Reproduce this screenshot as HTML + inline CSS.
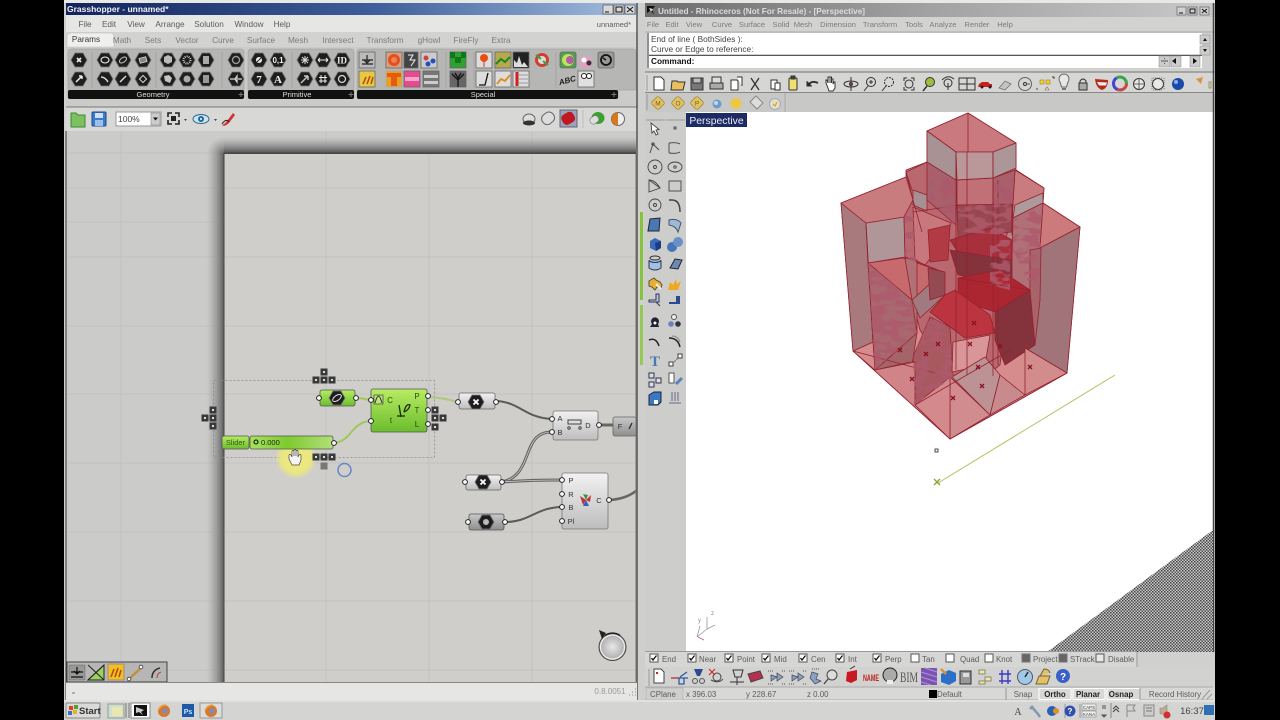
<!DOCTYPE html>
<html><head><meta charset="utf-8"><title>Grasshopper and Rhinoceros</title>
<style>html,body{margin:0;padding:0;background:#000;overflow:hidden}svg{display:block;filter:blur(.35px);font-size:8.5px}text{font-family:"Liberation Sans",sans-serif;fill:#5c5c5c}.b{font-weight:bold;fill:#222}.w{fill:#ddd;font-size:7.5px}.s{fill:#7c7c7c}</style></head><body>
<svg xmlns="http://www.w3.org/2000/svg" width="1280" height="720" viewBox="0 0 1280 720">
<defs>
<linearGradient id="gt" x1="0" x2="1"><stop offset="0" stop-color="#12235c"/><stop offset=".55" stop-color="#3f609c"/><stop offset="1" stop-color="#a6c0e0"/></linearGradient>
<linearGradient id="rt" x1="0" x2="1"><stop offset="0" stop-color="#6c6c6c"/><stop offset=".5" stop-color="#a2a2a2"/><stop offset="1" stop-color="#c8c8c8"/></linearGradient>
<linearGradient id="sh" x1="0" x2="1"><stop offset="0" stop-color="#999" stop-opacity="0"/><stop offset=".6" stop-color="#8c8c8c" stop-opacity=".8"/><stop offset="1" stop-color="#5c5c5c"/></linearGradient>
<linearGradient id="sv" x1="0" x2="0" y1="0" y2="1"><stop offset="0" stop-color="#999" stop-opacity="0"/><stop offset=".6" stop-color="#808080" stop-opacity=".85"/><stop offset="1" stop-color="#484848"/></linearGradient>
<radialGradient id="co" gradientUnits="userSpaceOnUse" cx="224" cy="154" r="17"><stop offset="0" stop-color="#5c5c5c"/><stop offset=".4" stop-color="#8c8c8c" stop-opacity=".8"/><stop offset="1" stop-color="#999" stop-opacity="0"/></radialGradient>
<linearGradient id="g1" x1="0" x2="0" y1="0" y2="1"><stop offset="0" stop-color="#b7ec62"/><stop offset="1" stop-color="#6cbc2e"/></linearGradient>
<linearGradient id="w1" x1="0" x2="0" y1="0" y2="1"><stop offset="0" stop-color="#f2f2f2"/><stop offset="1" stop-color="#bdbdbd"/></linearGradient>
<linearGradient id="w2" x1="0" x2="0" y1="0" y2="1"><stop offset="0" stop-color="#c9c9c9"/><stop offset="1" stop-color="#8e8e8e"/></linearGradient>
<linearGradient id="sl" x1="0" x2="1"><stop offset="0" stop-color="#a6e25c"/><stop offset=".45" stop-color="#7ecb30"/><stop offset="1" stop-color="#b2de7a"/></linearGradient>
<radialGradient id="yl"><stop offset="0" stop-color="#f2ec78"/><stop offset=".72" stop-color="#ece87c" stop-opacity=".9"/><stop offset="1" stop-color="#ece87c" stop-opacity="0"/></radialGradient>
<radialGradient id="cl"><stop offset="0" stop-color="#e8e8e8"/><stop offset="1" stop-color="#a8a8a8"/></radialGradient>
<pattern id="ck" width="3" height="3" patternUnits="userSpaceOnUse"><rect width="3" height="3" fill="#c8c8c8"/><rect width="1.5" height="1.5" fill="#444"/><rect x="1.5" y="1.5" width="1.5" height="1.5" fill="#555"/></pattern>
<filter id="mot" x="0" y="0" width="1" height="1"><feTurbulence type="fractalNoise" baseFrequency=".07 .14" numOctaves="2" seed="4"/><feColorMatrix values="0 0 0 0 .42 0 0 0 0 .1 0 0 0 0 .15 0 0 0 10 -4.6"/><feComposite in2="SourceAlpha" operator="in"/></filter>
<g id="h"><polygon points="-8,0 -4,-7 4,-7 8,0 4,7 -4,7" fill="#1e1e1e" stroke="#777" stroke-width=".8"/></g>
<g id="n"><rect x="-3.5" y="-3.5" width="7" height="7" fill="#3a3a3a"/><rect x="-1" y="-1" width="2" height="2" fill="#ddd"/></g>
<g id="p"><circle r="2.4" fill="#fff" stroke="#222" stroke-width="1"/></g>
<g id="x"><path d="M-2-2L2 2M-2 2L2-2" stroke="#8b1220" stroke-width="1.3"/></g>
<g id="ck0"><rect x="-4" y="-4" width="8" height="8" fill="#fff" stroke="#555"/><path d="M-2.5 0L-1 2L2.5-2.5" fill="none" stroke="#111" stroke-width="1.3"/></g>
<g id="tag"><rect x="-5" y="-5" width="10" height="10" rx="2" fill="#e2c268" stroke="#a88c30" stroke-width=".8" transform="rotate(45)"/></g>
</defs>

<rect width="1280" height="720" fill="#000"/>
<rect x="64" y="0" width="1151" height="720" fill="#d0d0ce"/>
<rect x="64" y="0" width="1151" height="3" fill="#e8e8e4"/>

<!-- GRASSHOPPER WINDOW -->
<rect x="66" y="3" width="572" height="12" fill="url(#gt)"/>
<text x="67" y="12" style="font-weight:bold;fill:#f2f2f2;font-size:8.5px">Grasshopper - unnamed*</text>
<g fill="#d8d8d8" stroke="#444" stroke-width=".6"><rect x="603" y="5" width="10" height="9"/><rect x="614" y="5" width="10" height="9"/><rect x="625" y="5" width="10" height="9"/></g>
<path d="M605 12h4" stroke="#111"/><rect x="616" y="7" width="6" height="5" fill="none" stroke="#111"/><path d="M627 7l6 5M633 7l-6 5" stroke="#111"/>
<rect x="66" y="15" width="572" height="17" fill="#e6e6e4"/>
<g style="font-size:8.2px">
<text x="85" y="27" text-anchor="middle">File</text><text x="109" y="27" text-anchor="middle">Edit</text><text x="136" y="27" text-anchor="middle">View</text><text x="170" y="27" text-anchor="middle">Arrange</text><text x="209" y="27" text-anchor="middle">Solution</text><text x="249" y="27" text-anchor="middle">Window</text><text x="282" y="27" text-anchor="middle">Help</text>
<text x="631" y="27" text-anchor="end" style="font-size:7.5px">unnamed*</text>
</g>
<rect x="66" y="32" width="572" height="16" fill="#d2d2d0"/>
<path d="M67 47v-10q0-4 4-4h39q4 0 4 4v10z" fill="#efefed" stroke="#bbb" stroke-width=".6"/>
<g style="font-size:8.2px">
<text x="86" y="42" text-anchor="middle" style="fill:#333">Params</text><text x="122" y="43" text-anchor="middle" class="s">Math</text><text x="153" y="43" text-anchor="middle" class="s">Sets</text><text x="187" y="43" text-anchor="middle" class="s">Vector</text><text x="223" y="43" text-anchor="middle" class="s">Curve</text><text x="261" y="43" text-anchor="middle" class="s">Surface</text><text x="298" y="43" text-anchor="middle" class="s">Mesh</text><text x="338" y="43" text-anchor="middle" class="s">Intersect</text><text x="385" y="43" text-anchor="middle" class="s">Transform</text><text x="429" y="43" text-anchor="middle" class="s">gHowl</text><text x="466" y="43" text-anchor="middle" class="s">FireFly</text><text x="501" y="43" text-anchor="middle" class="s">Extra</text>
</g>
<rect x="66" y="47" width="572" height="60" fill="#cbcbc9"/>
<path d="M68 52q0-3 3-3h169q4 0 4 3v46H68z" fill="#b6b6b4" stroke="#999" stroke-width=".5"/>
<path d="M248 52q0-3 3-3h100q3 0 3 3v46H248z" fill="#b6b6b4" stroke="#999" stroke-width=".5"/>
<path d="M357 52q0-3 3-3h273q3 0 3 3v38H618v8H357z" fill="#b6b6b4" stroke="#999" stroke-width=".5"/>
<g fill="#111"><rect x="68" y="90" width="176" height="9" rx="2"/><rect x="248" y="90" width="106" height="9" rx="2"/><rect x="357" y="90" width="261" height="9" rx="2"/></g>
<text x="153" y="97" text-anchor="middle" class="w">Geometry</text><text x="297" y="97" text-anchor="middle" class="w">Primitive</text><text x="483" y="97" text-anchor="middle" class="w">Special</text>
<path d="M241 92v5M238.500 94.500h5M351 92v5M348.500 94.500h5M614 92v5M611.500 94.500h5" stroke="#777"/>
<path d="M92 52v36M156 52v36M222 52v36M292 52v36M474 52v36M556 52v36M446 52v36" stroke="#999" stroke-width=".6"/>

<!-- param hexes -->
<use href="#h" x="79" y="60"/><use href="#h" x="105" y="60"/><use href="#h" x="123" y="60"/><use href="#h" x="143" y="60"/><use href="#h" x="168" y="60"/><use href="#h" x="187" y="60"/><use href="#h" x="206" y="60"/><use href="#h" x="236" y="60"/>
<use href="#h" x="79" y="79"/><use href="#h" x="105" y="79"/><use href="#h" x="123" y="79"/><use href="#h" x="143" y="79"/><use href="#h" x="168" y="79"/><use href="#h" x="187" y="79"/><use href="#h" x="206" y="79"/><use href="#h" x="236" y="79"/>
<use href="#h" x="259" y="60"/><use href="#h" x="278" y="60"/><use href="#h" x="305" y="60"/><use href="#h" x="323" y="60"/><use href="#h" x="342" y="60"/>
<use href="#h" x="259" y="79"/><use href="#h" x="278" y="79"/><use href="#h" x="305" y="79"/><use href="#h" x="323" y="79"/><use href="#h" x="342" y="79"/>
<path d="M77 58l4 4M81 58l-4 4" stroke="#eee" stroke-width="1.6"/>
<ellipse cx="105" cy="60" rx="4" ry="3" fill="none" stroke="#eee" stroke-width="1.1"/>
<ellipse cx="123" cy="60" rx="4" ry="2.300" fill="none" stroke="#ccc" transform="rotate(-35 123 60)"/>
<rect x="139.500" y="57.500" width="7" height="5" fill="#888" stroke="#ddd" stroke-width=".8" transform="rotate(-15 143 60)"/>
<path d="M164 57l4-2 4 2v5l-4 2-4-2z" fill="#bbb"/><circle cx="187" cy="60" r="3.500" fill="none" stroke="#ccc" stroke-dasharray="1 1" stroke-width="2"/><rect x="203" y="56" width="6" height="8" fill="#aaa"/><circle cx="236" cy="60" r="3.500" fill="none" stroke="#999" stroke-width="1.400"/>
<path d="M76 82l6-6M82 76v3M82 76h-3" stroke="#eee" stroke-width="1.500" fill="none"/><path d="M101 77q4 0 7 5" fill="none" stroke="#ddd" stroke-width="1.400"/><path d="M120 82l6-6" stroke="#ddd" stroke-width="1.400"/><rect x="140.500" y="76.500" width="5" height="5" fill="none" stroke="#ddd" transform="rotate(45 143 79)"/>
<path d="M164 76l5-1 3 3-2 5-5-2z" fill="#c4c4c4"/><circle cx="187" cy="79" r="3.500" fill="#aaa"/><rect x="203" y="75" width="6" height="8" fill="#999"/><path d="M230 79h5l2-3v6l-2-3M238 79h4" stroke="#ddd" fill="none" stroke-width="1.200"/>
<circle cx="259" cy="60" r="3" fill="#eee"/><path d="M257 62l4-4" stroke="#222"/><text x="278" y="63" text-anchor="middle" style="fill:#eee;font-size:8px;font-weight:bold">0,1</text>
<path d="M301 60h8M305 56v8M302 57l6 6M308 57l-6 6" stroke="#ddd"/><path d="M318 60h10M318 60l2-2M318 60l2 2M328 60l-2-2M328 60l-2 2" stroke="#eee" fill="none"/><text x="342" y="63.500" text-anchor="middle" style="fill:#eee;font-size:9px;font-weight:bold;font-family:'Liberation Serif',serif">ID</text>
<text x="259" y="83" text-anchor="middle" style="fill:#eee;font-size:11px;font-weight:bold;font-family:'Liberation Serif',serif">7</text><text x="278" y="83" text-anchor="middle" style="fill:#eee;font-size:11px;font-weight:bold;font-family:'Liberation Serif',serif">A</text>
<path d="M301 83l7-7M308 76v4M308 76h-4" stroke="#ccc" stroke-width="1.400" fill="none"/><path d="M321 75v8M325 75v8M319 77.500h8M319 81h8" stroke="#eee"/><circle cx="342" cy="79" r="3.500" fill="none" stroke="#ddd" stroke-width="1.200"/>

<!-- special squares -->
<g stroke="#666" stroke-width=".8">
<rect x="359" y="52" width="16" height="16" fill="#bbb"/><rect x="359" y="71" width="16" height="16" fill="#e8c840"/>
<rect x="386" y="52" width="16" height="16" fill="#d8a080"/><rect x="404" y="52" width="14" height="16" fill="#444"/><rect x="421" y="52" width="16" height="16" fill="#ccc"/>
<rect x="386" y="71" width="16" height="16" fill="#e8a020" stroke="#aaa"/><rect x="404" y="71" width="16" height="16" fill="#e84a90"/><rect x="423" y="71" width="16" height="16" fill="#777"/>
<rect x="450" y="52" width="16" height="16" fill="#30a030"/><rect x="450" y="71" width="16" height="16" fill="#666"/>
<rect x="476" y="52" width="16" height="16" fill="#ddd"/><rect x="476" y="71" width="16" height="16" fill="#ddd"/>
<rect x="495" y="52" width="16" height="16" fill="#b8a850"/><rect x="495" y="71" width="16" height="16" fill="#ddd"/>
<rect x="513" y="52" width="16" height="16" fill="#222"/><rect x="513" y="71" width="16" height="16" fill="#ddd"/>
<rect x="560" y="52" width="16" height="16" fill="#50a050" rx="2"/><rect x="578" y="71" width="16" height="16" fill="#e0e0e0"/><rect x="598" y="52" width="16" height="16" fill="#999" rx="2"/>
</g>
<path d="M362 60h11M367 55v7M364 60l3 3 3-3M362 64h11" stroke="#222" stroke-width="1.200" fill="none"/>
<path d="M363 84l3-7M367 84l3-8M371 84l2-7" stroke="#b04810" stroke-width="1.500"/>
<circle cx="394" cy="60" r="6" fill="#e05020"/><circle cx="394" cy="60" r="3" fill="#f08050"/>
<path d="M408 55h5l-3 5h5l-4 6" stroke="#eee" fill="none"/><circle cx="426" cy="58" r="2.500" fill="#d04040"/><circle cx="433" cy="61" r="2.500" fill="#2050c0"/><circle cx="428" cy="64" r="2.500" fill="#2050c0"/>
<path d="M387 73h14v4h-4v9h-6v-9h-4z" fill="#e85a10"/><rect x="405" y="77" width="14" height="4" fill="#fff" opacity=".5"/><path d="M424 75h14v3h-14zM424 81h14v3h-14z" fill="#ccc"/>
<path d="M450 52h5v5h6v-5h5v6h-5v5h-6v-5h-5z" fill="#0c7a18"/><path d="M458 87v-7M452 74l6 6 6-6M455 73l3 5 3-5" stroke="#111" stroke-width="1.300" fill="none"/>
<circle cx="484" cy="58" r="4" fill="#e85010"/><path d="M484 62v5" stroke="#c33"/><path d="M479 85h6l3-12" stroke="#111" stroke-width="1.300" fill="none"/>
<path d="M496 64l5-5 4 3 5-5" stroke="#1a8a20" stroke-width="2" fill="none"/><path d="M497 84l4-5 4 2 5-6" stroke="#e09020" stroke-width="2" fill="none"/>
<path d="M514 67v-7l3 3 2-7 3 9 2-3 4 5z" fill="#ddd"/><path d="M517 72v14" stroke="#d02020" stroke-width="3"/><path d="M519 75h9M519 79h9M519 83h9" stroke="#999"/>
<circle cx="542" cy="60" r="7" fill="#d04030"/><circle cx="542" cy="60" r="4" fill="#dcdcdc"/><path d="M536 55l5 4M548 65l-5-4" stroke="#40a040" stroke-width="2"/>
<circle cx="568" cy="60" r="6" fill="#c4e060"/><circle cx="570" cy="60" r="4" fill="#b060a0"/>
<circle cx="586" cy="62" r="6.500" fill="#e0a0c0"/><circle cx="584" cy="60" r="2.500" fill="#fff"/><circle cx="589" cy="63" r="2.500" fill="#333"/>
<circle cx="606" cy="60" r="5" fill="none" stroke="#111" stroke-width="1.800"/><path d="M606 60l-3-2" stroke="#111" stroke-width="1.500"/>
<text x="568" y="83" text-anchor="middle" transform="rotate(-15 568 83)" style="font-size:8px;font-style:italic;font-weight:bold;fill:#222">ABC</text>
<circle cx="584" cy="76" r="2.500" fill="#fff" stroke="#222"/><circle cx="589" cy="76" r="2.500" fill="#fff" stroke="#222"/>

<!-- GH toolbar -->
<rect x="66" y="107" width="572" height="24" fill="#d8d8d6"/>
<path d="M66 107h572" stroke="#777" stroke-width="1"/>
<path d="M71 113h5l2 2h7v12H71z" fill="#7cc060" stroke="#3c8a30"/>
<rect x="92" y="112" width="14" height="14" rx="1" fill="#3a7ad0" stroke="#1c4a90"/><rect x="95" y="113" width="8" height="5" fill="#cfe0f4"/><rect x="95" y="120" width="8" height="6" fill="#9cc0e8"/>
<rect x="116" y="112" width="45" height="14" fill="#fff" stroke="#999"/><rect x="151" y="113" width="9" height="12" fill="#ccc" stroke="#888" stroke-width=".6"/><path d="M153 117.500h5l-2.500 3z" fill="#111"/>
<text x="118" y="122" style="fill:#444;font-size:8.500px">100%</text>
<g fill="none" stroke="#222" stroke-width="1.600"><path d="M168 117v-4h4M175 113h4v4M168 120v4h4M179 120v4h-4"/></g><rect x="171" y="116" width="5" height="5" fill="#222"/>
<path d="M184 119h3l-1.500 2z M214 119h3l-1.500 2z" fill="#444"/>
<ellipse cx="201" cy="119" rx="8" ry="4.500" fill="#cfe4f0" stroke="#2c6a90"/><circle cx="201" cy="119" r="3" fill="#1e6a9a"/><circle cx="201" cy="119" r="1" fill="#fff"/>
<path d="M222 125q3-1 5-4l6-8 2 2-6 8q-2 2-5 3z" fill="#d83030"/><path d="M222 124q4-6 7-2" fill="none" stroke="#222"/>
<ellipse cx="529" cy="119" rx="6" ry="5" fill="#ddd" stroke="#666"/><ellipse cx="529" cy="123" rx="6" ry="2.500" fill="#333"/>
<rect x="542" y="113" width="13" height="11" rx="5" fill="#ddd" stroke="#666" transform="rotate(-40 548 119)"/>
<rect x="560" y="110" width="17" height="17" fill="#9aa4bc" stroke="#667"/><rect x="562" y="113" width="13" height="11" rx="4" fill="#c01820" transform="rotate(-30 568 119)"/>
<path d="M583 110v18" stroke="#bbb"/>
<ellipse cx="598" cy="118" rx="6.500" ry="6" fill="#3aa030"/><rect x="590" y="116" width="9" height="7" rx="3" fill="#ddd" stroke="#777" stroke-width=".6" transform="rotate(-35 595 120)"/>
<circle cx="618" cy="119" r="6.500" fill="#eee" stroke="#666"/><path d="M618 112.500a6.500 6.500 0 0 0 0 13z" fill="#d87818"/>

<!-- Canvas -->
<rect x="66" y="131" width="571" height="552" fill="#cbcbc9"/>
<rect x="224" y="154" width="412" height="528" fill="#cfcecb"/>
<g stroke="#bfbfbd" stroke-width=".8"><path d="M67 153H224M67 188H636M67 222H224M67 257H636M67 326H636M67 394H636M67 463H636M67 532H636M67 601H636M67 670H636M121 131V682M326 131V682M429 154V682M532 131V682"/></g>
<rect x="207" y="154" width="17" height="528" fill="url(#sh)"/>
<rect x="224" y="137" width="412" height="17" fill="url(#sv)"/>
<path d="M224 154V137A17 17 0 0 0 207 154Z" fill="url(#co)"/>
<path d="M224 153V682M224 153H636" stroke="#444" stroke-width="1"/>
<path d="M66 131V700" stroke="#333" stroke-width="1"/><path d="M637 3V700" stroke="#555" stroke-width="1.500"/>

<!-- dashed selection -->
<rect x="213.500" y="380.500" width="221" height="77" fill="none" stroke="#8a8a8a" stroke-width=".8" stroke-dasharray="2 2"/>
<!-- wires -->
<g fill="none">
<path d="M334 443C352 441 350 424 369 421" stroke="#9fc85a" stroke-width="2"/>
<path d="M355 398Q362 398 369 400" stroke="#9fc85a" stroke-width="2"/>
<path d="M429 397Q445 398 457 402" stroke="#aec87a" stroke-width="2"/>
<path d="M496 401C520 402 525 418 552 419" stroke="#5a5a5a" stroke-width="2"/>
<path d="M502 482C535 475 520 432 552 432" stroke="#666" stroke-width="3"/><path d="M502 482C535 475 520 432 552 432" stroke="#ccc" stroke-width=".8"/>
<path d="M502 482Q530 480 561 480" stroke="#666" stroke-width="3"/><path d="M502 482Q530 480 561 480" stroke="#ccc" stroke-width=".8"/>
<path d="M505 522C530 522 535 508 561 507" stroke="#5a5a5a" stroke-width="2"/>
<path d="M610 500C620 499 628 497 636 491" stroke="#666" stroke-width="2.500"/>
<path d="M599 425h14" stroke="#666" stroke-width="3"/>
</g>
<!-- highlight -->
<circle cx="296" cy="458" r="21" fill="url(#yl)"/>
<!-- slider -->
<rect x="222" y="436" width="27" height="13" rx="2" fill="url(#g1)" stroke="#555" stroke-width=".8"/>
<rect x="250" y="436" width="83" height="13" rx="2" fill="url(#sl)" stroke="#555" stroke-width=".8"/>
<text x="235.500" y="445" text-anchor="middle" style="fill:#2c5a10;font-size:7.500px">Slider</text>
<circle cx="256" cy="442" r="2" fill="none" stroke="#111" stroke-width="1.100"/>
<text x="261" y="445" style="fill:#222;font-size:7.500px">0.000</text>
<use href="#p" x="334" y="443"/>
<!-- hand -->
<path d="M292 465l-3-6v-4q1-1 2 0l1 2v-6q1-1 2 0v5v-6q1-1 2 0v6v-5q1-1 2 0v6l1-2q1-1 2 0v5l-2 5z" fill="#f4f4f4" stroke="#444" stroke-width=".7"/>
<circle cx="344.500" cy="470" r="6.500" fill="none" stroke="#6a84c8" stroke-width="1.500"/>
<!-- param curve -->
<rect x="320" y="390" width="35" height="16" rx="2" fill="url(#g1)" stroke="#555" stroke-width=".8"/>
<use href="#h" x="337" y="398"/><ellipse cx="337" cy="398" rx="5" ry="2.500" fill="none" stroke="#ddd" transform="rotate(-35 337 398)"/>
<use href="#p" x="319" y="398"/><use href="#p" x="356" y="398"/>
<!-- green comp -->
<rect x="371" y="389" width="56" height="43" rx="2" fill="url(#g1)" stroke="#555" stroke-width=".8"/>
<rect x="374" y="395" width="9" height="9" fill="#bce57c" stroke="#444" stroke-width=".7"/><path d="M375 403q2-7 3.500-7t3.500 7" fill="none" stroke="#333"/>
<text x="390" y="403" text-anchor="middle" style="fill:#2a4a10;font-size:8px">C</text><text x="391" y="423" text-anchor="middle" style="fill:#2a4a10;font-size:8px">t</text>
<text x="417" y="399" text-anchor="middle" style="fill:#2a4a10;font-size:8px">P</text><text x="417" y="413" text-anchor="middle" style="fill:#2a4a10;font-size:8px">T</text><text x="417" y="427" text-anchor="middle" style="fill:#2a4a10;font-size:8px">L</text>
<path d="M399 405l2 12M397 416h8M404 412q2-9 6-7-1 5-6 7" fill="none" stroke="#1a2a08" stroke-width="1.300"/>
<use href="#p" x="371" y="400"/><use href="#p" x="371" y="421"/><use href="#p" x="428" y="396"/><use href="#p" x="428" y="410"/><use href="#p" x="428" y="424"/>
<!-- nodes -->
<use href="#n" x="324" y="372"/><use href="#n" x="316" y="380"/><use href="#n" x="324" y="380"/><use href="#n" x="332" y="380"/>
<use href="#n" x="213" y="410"/><use href="#n" x="213" y="418"/><use href="#n" x="205" y="418"/><use href="#n" x="213" y="426"/>
<use href="#n" x="435" y="410"/><use href="#n" x="435" y="418"/><use href="#n" x="443" y="418"/><use href="#n" x="435" y="427"/>
<use href="#n" x="316" y="457"/><use href="#n" x="324" y="457"/><use href="#n" x="332" y="457"/><rect x="320.500" y="462.500" width="7" height="7" fill="#777"/>
<!-- x param -->
<rect x="459" y="393" width="36" height="16" rx="2" fill="url(#w1)" stroke="#666" stroke-width=".8"/><use href="#h" x="476" y="402"/><path d="M473.500 399.500l5 5M478.500 399.500l-5 5" stroke="#fff" stroke-width="1.800"/>
<use href="#p" x="458" y="402"/><use href="#p" x="496" y="402"/>
<rect x="466" y="475" width="35" height="15" rx="2" fill="url(#w1)" stroke="#666" stroke-width=".8"/><use href="#h" x="483" y="482"/><path d="M480.500 479.500l5 5M485.500 479.500l-5 5" stroke="#fff" stroke-width="1.800"/>
<use href="#p" x="465" y="482"/><use href="#p" x="502" y="482"/>
<rect x="469" y="514" width="35" height="16" rx="2" fill="url(#w2)" stroke="#555" stroke-width=".8"/><use href="#h" x="486" y="522"/><circle cx="486" cy="522" r="3" fill="#bbb"/>
<use href="#p" x="468" y="522"/><use href="#p" x="505" y="522"/>
<!-- comps -->
<rect x="553" y="411" width="45" height="29" rx="2" fill="url(#w1)" stroke="#777" stroke-width=".8"/>
<text x="560" y="421" text-anchor="middle" style="font-size:7.500px;fill:#333">A</text><text x="560" y="435" text-anchor="middle" style="font-size:7.500px;fill:#333">B</text><text x="588" y="428" text-anchor="middle" style="font-size:7.500px;fill:#333">D</text>
<rect x="568" y="420" width="13" height="4" fill="none" stroke="#444"/><circle cx="569" cy="428" r="1.200" fill="none" stroke="#444"/><circle cx="580" cy="428" r="1.200" fill="none" stroke="#444"/>
<use href="#p" x="552" y="419"/><use href="#p" x="552" y="432"/><use href="#p" x="599" y="425"/>
<rect x="613" y="417" width="23" height="19" rx="2" fill="url(#w2)" stroke="#666" stroke-width=".8"/><text x="620" y="429" text-anchor="middle" style="font-size:7.500px;fill:#333">F</text><path d="M629 429l3-6" stroke="#222" stroke-width="1.200"/>
<rect x="562" y="473" width="46" height="56" rx="2" fill="url(#w1)" stroke="#777" stroke-width=".8"/>
<text x="571" y="483" text-anchor="middle" style="font-size:7.500px;fill:#333">P</text><text x="571" y="497" text-anchor="middle" style="font-size:7.500px;fill:#333">R</text><text x="571" y="510" text-anchor="middle" style="font-size:7.500px;fill:#333">B</text><text x="571" y="524" text-anchor="middle" style="font-size:7.500px;fill:#333">Pl</text><text x="599" y="503" text-anchor="middle" style="font-size:7.500px;fill:#333">C</text>
<path d="M580 496l6 4-3 5zM586 500l5-5-1 7z" fill="#c83030"/><path d="M586 500l3 6-6 0z" fill="#3060c0"/><path d="M586 500l-3-6 5 1z" fill="#309a40"/>
<use href="#p" x="562" y="480"/><use href="#p" x="562" y="494"/><use href="#p" x="562" y="507"/><use href="#p" x="562" y="521"/><use href="#p" x="609" y="500"/>
<path d="M636 154V682" stroke="#777"/>
<!-- clock -->
<circle cx="612.500" cy="647" r="13.500" fill="url(#cl)" stroke="#444" stroke-width="1"/><circle cx="612.500" cy="647" r="12" fill="none" stroke="#eee" stroke-width="1.200"/>
<path d="M599 630l7 3-4 6z" fill="#222"/><path d="M605 635.500A13.500 13.500 0 0 1 620 635.500" fill="none" stroke="#222" stroke-width="1.600"/>
<!-- bottom left palette -->
<rect x="67" y="662" width="100" height="20" fill="#b6b6b4" stroke="#444"/>
<rect x="69" y="665" width="16" height="15" fill="#999" stroke="#666" stroke-width=".5"/><path d="M71 672h12M77 667v7M74 671l3 3 3-3M71 677h12" stroke="#111" stroke-width="1.200" fill="none"/>
<path d="M88 680l16-15v15z" fill="#9cd060" stroke="#222"/><path d="M88 665l16 15M104 665l-16 15" stroke="#222"/>
<rect x="108" y="664" width="16" height="16" fill="#f0c020" stroke="#a88"/><path d="M111 677l3-8M115 677l3-9M119 677l2-7" stroke="#b04810" stroke-width="1.500"/>
<path d="M130 678l11-10" stroke="#c09040" stroke-width="2.500"/><circle cx="129" cy="679" r="1.800" fill="#fff" stroke="#555"/><circle cx="141" cy="667" r="1.800" fill="#fff" stroke="#555"/>
<path d="M152 678q0-8 8-10" fill="none" stroke="#333" stroke-width="1.500"/><path d="M157 678q0-5 4-6" fill="none" stroke="#c03040" stroke-width="1"/>
<!-- status -->
<rect x="66" y="683" width="571" height="17" fill="#e6e6e4"/>
<path d="M66 682.500H637" stroke="#888"/>
<text x="610" y="694" text-anchor="middle" style="fill:#999;font-size:8px">0.8.0051</text>
<path d="M72 693h3" stroke="#777"/>
<path d="M629 695h1M632 695h1M635 695h1M632 692h1M635 692h1M635 689h1" stroke="#888"/>

<!-- green strip between windows -->
<rect x="639" y="3" width="6" height="697" fill="#cfcfcd"/>
<rect x="640" y="212" width="3" height="88" fill="#84c43c"/><rect x="640" y="305" width="3" height="60" fill="#96c856"/>

<!-- RHINO -->
<rect x="645" y="3" width="570" height="14" fill="url(#rt)"/>
<path d="M647 6h8l-3 4 2 4-4-3-3 2z" fill="#111"/><path d="M649 8l4 1-2 3z" fill="#ddd"/>
<text x="658" y="14" style="font-weight:bold;fill:#dcdcdc;font-size:8.2px">Untitled - Rhinoceros (Not For Resale) - [Perspective]</text>
<g fill="#d0d0d0" stroke="#555" stroke-width=".6"><rect x="1177" y="7" width="9" height="8"/><rect x="1188" y="7" width="9" height="8"/><rect x="1200" y="7" width="9" height="8"/></g>
<path d="M1179 13h4" stroke="#111"/><rect x="1190" y="9" width="5" height="4" fill="none" stroke="#111"/><path d="M1202 9l5 4M1207 9l-5 4" stroke="#111"/>
<rect x="645" y="17" width="570" height="15" fill="#d2d2d0"/>
<g style="font-size:7.600px" text-anchor="middle">
<text x="653" y="27" class="s">File</text><text x="672" y="27" class="s">Edit</text><text x="694" y="27" class="s">View</text><text x="722" y="27" class="s">Curve</text><text x="752" y="27" class="s">Surface</text><text x="781" y="27" class="s">Solid</text><text x="803" y="27" class="s">Mesh</text><text x="838" y="27" class="s">Dimension</text><text x="880" y="27" class="s">Transform</text><text x="914" y="27" class="s">Tools</text><text x="943" y="27" class="s">Analyze</text><text x="977" y="27" class="s">Render</text><text x="1005" y="27" class="s">Help</text>
</g>
<path d="M645 32H1215" stroke="#aaa"/>
<rect x="649" y="33" width="553" height="21" fill="#fff"/><rect x="649" y="56" width="553" height="12" fill="#fff"/>
<path d="M648 33V68M649 55.500H1202" stroke="#555"/>
<text x="651" y="42" style="fill:#444;font-size:8.300px">End of line ( BothSides ):</text><text x="651" y="52" style="fill:#444;font-size:8.300px">Curve or Edge to reference:</text>
<text x="651" y="64" style="fill:#111;font-size:8.300px;font-weight:bold">Command:</text>
<g fill="#ccc" stroke="#888" stroke-width=".5"><rect x="1200" y="35" width="10" height="9"/><rect x="1200" y="46" width="10" height="9"/><rect x="1159" y="56" width="11" height="11"/><rect x="1171" y="56" width="10" height="11"/><rect x="1190" y="56" width="10" height="11"/></g>
<path d="M1205 38l-2 3h4zM1203 49h4l-2 3zM1172 61l4-3v6zM1197 61l-4-3v6z" fill="#111"/>
<path d="M1161 61h7M1164.500 58v1M1164.500 63v1" stroke="#555"/>
<path d="M645 72H1215" stroke="#777"/>
<rect x="645" y="73" width="570" height="20" fill="#d6d6d4"/><rect x="645" y="93" width="570" height="19" fill="#c8c8c6"/>
<path d="M645 92.500H1213" stroke="#888"/>
<!-- rhino top toolbar -->
<g stroke="#333" stroke-width="1" fill="none">
<path d="M654 77h7l3 3v10h-10z" fill="#fff"/>
<path d="M672 81h5l1 1h7l-2 8h-12z" fill="#e8c060"/>
<rect x="691" y="78" width="12" height="12" fill="#777"/><rect x="693" y="78" width="8" height="5" fill="#bbb"/>
<rect x="710" y="83" width="13" height="6" fill="#aaa"/><rect x="712" y="77" width="9" height="6" fill="#ddd"/>
<path d="M731 80h6l1 1v9h-7zM737 77h5v9" fill="#fff"/>
<path d="M751 78l8 12M759 78l-8 12" stroke-width="1.300"/>
<rect x="771" y="80" width="6" height="9" fill="#fff"/><rect x="775" y="83" width="5" height="7" fill="#fff"/>
<rect x="789" y="78" width="8" height="12" fill="#f0e070" rx="1"/><rect x="791" y="76" width="4" height="3" fill="#444"/>
<path d="M808 85q4-5 10-2" stroke-width="2"/><path d="M807 81v5h5" fill="#222"/>
<path d="M828 88l-2-5v-3h1l1 3v-6h2v6-6h1.500v6-4h1.500v5l1-2h1v6l-2 3h-4z" fill="#fff"/>
<ellipse cx="851" cy="84" rx="7" ry="3"/><path d="M851 77v14"/><circle cx="851" cy="84" r="1.500" fill="#c33"/>
<circle cx="871" cy="82" r="4.500"/><path d="M868 86l-4 5M869 82h4M871 80v4"/>
<circle cx="889" cy="82" r="4.500" stroke-dasharray="2 1"/><path d="M886 86l-4 5"/>
<path d="M904 81v-3h3M911 78h3v3M904 87v3h3M914 87v3h-3"/><circle cx="909" cy="84" r="4"/>
<circle cx="930" cy="82" r="4.500" fill="#9bc040"/><path d="M927 86l-4 5" stroke-width="1.500"/>
<circle cx="948" cy="83" r="4"/><path d="M942 80q6-6 12-1M948 83v7"/>
<path d="M959 78h16v12h-16zM967 78v12M959 84h16"/>
</g>
<path d="M979 84l3-2h6l2 2h2v3h-14z" fill="#c82020"/><circle cx="982" cy="87" r="1.500" fill="#222"/><circle cx="990" cy="87" r="1.500" fill="#222"/>
<path d="M999 88l6-7 6 3-6 6z" fill="#c4c4c4" stroke="#666" stroke-width=".7"/>
<circle cx="1025" cy="84" r="6.500" fill="none" stroke="#666"/><circle cx="1025" cy="84" r="1.500" fill="none" stroke="#333"/><path d="M1026 84h4" stroke="#555"/>
<rect x="1040" y="80" width="4" height="4" fill="#f0d030" stroke="#a08020" stroke-width=".6"/><rect x="1046" y="80" width="4" height="4" fill="#f0d030" stroke="#a08020" stroke-width=".6"/><path d="M1047 87l-2 3h4z" fill="#f0f0c0" stroke="#666" stroke-width=".6"/><path d="M1037 90v-2M1052 77h2v2" stroke="#444" fill="none"/>
<path d="M1060 82a5 5 0 1 1 8 0l-1.500 5h-5z" fill="#e8e8e8" stroke="#666"/><path d="M1062 89h4" stroke="#555" stroke-width="1.500"/>
<rect x="1079" y="83" width="8" height="7" fill="#aaa" stroke="#333"/><path d="M1080 83v-2q3-4 6 0v2" fill="none" stroke="#333"/>
<path d="M1095 79l13 1q0 8-6 10-6-2-7-11z" fill="#b82818"/><path d="M1097 82l10 .5-1 3h-7z" fill="#f0f0f0"/>
<circle cx="1120" cy="83.500" r="6.500" fill="none" stroke="#c44" stroke-width="3" stroke-dasharray="14 27"/><circle cx="1120" cy="83.500" r="6.500" fill="none" stroke="#3a4" stroke-width="3" stroke-dasharray="14 27" stroke-dashoffset="14"/><circle cx="1120" cy="83.500" r="6.500" fill="none" stroke="#44c" stroke-width="3" stroke-dasharray="14 27" stroke-dashoffset="28"/>
<circle cx="1139" cy="84" r="5.500" fill="#e8e8e8" stroke="#333"/><path d="M1139 78.500v11M1133.500 84h11" stroke="#666"/>
<circle cx="1158" cy="84" r="5.500" fill="#e8e8e8" stroke="#333"/><path d="M1153 78h10M1153 90h10M1152 78v12M1164 78v12" stroke="#777" stroke-dasharray="1 1"/>
<circle cx="1178" cy="84" r="6" fill="#1c4aa8"/><circle cx="1176" cy="82" r="2" fill="#8ab0f0"/>
<path d="M1196 79l7-2-2 7z" fill="#e09040"/><path d="M1209 82h2v6h-2z" fill="none" stroke="#996"/>
<path d="M647 75V91" stroke="#999"/><path d="M647 94V110" stroke="#999"/>
<!-- second row -->
<use href="#tag" x="658" y="103"/><use href="#tag" x="678" y="103"/><use href="#tag" x="697" y="103"/>
<text x="658" y="105.500" text-anchor="middle" style="font-size:6.500px;fill:#7a5a18">M</text><text x="678" y="105.500" text-anchor="middle" style="font-size:6.500px;fill:#7a5a18">O</text><text x="697" y="105.500" text-anchor="middle" style="font-size:6.500px;fill:#7a5a18">P</text>
<circle cx="717" cy="104" r="4.500" fill="#6c9cc8"/><circle cx="716" cy="103" r="2" fill="#c0d8f0"/>
<path d="M736 97l2 3 3-2-1 4 3 1-3 2 1 3-3-1-2 3-2-3-3 1 1-3-3-2 3-1-1-4 3 2z" fill="#f0c838"/>
<path d="M750 102l6-6 7 7-6 6z" fill="#ddd" stroke="#888"/>
<circle cx="775" cy="104" r="5.500" fill="#e4e0c0" stroke="#a8a4c8"/><path d="M773 104l2 2 2-4" stroke="#cca020" fill="none"/>
<path d="M785 93v19" stroke="#aaa"/>
<!-- Viewport -->
<rect x="686" y="112" width="527" height="540" fill="#fff"/>
<rect x="645" y="112" width="41" height="540" fill="#cdcdcb"/>
<path d="M1213.500 3V700" stroke="#444" stroke-width="1.500"/>
<polygon points="1047,652 1213,530 1213,652" fill="url(#ck)"/>
<path d="M936 483H938l177-108" stroke="#b8c060" fill="none" stroke-width="1"/>
<path d="M934 479l6 6M940 479l-6 6" stroke="#90a030" stroke-width="1.300"/>
<rect x="935" y="449" width="3" height="3" fill="#fff" stroke="#222" stroke-width=".8"/>
<rect x="686" y="113" width="61" height="14" fill="#1c2a66"/>
<text x="716.500" y="124" text-anchor="middle" style="fill:#eee;font-size:10.400px">Perspective</text>
<!-- axes -->
<path d="M697 637l10-8M707 629v-12M707 629l8-4M700 626l-3 11" stroke="#999" fill="none" stroke-width=".8"/><text x="711" y="615" style="font-size:6px;fill:#888">z</text><text x="698" y="622" style="font-size:6px;fill:#888">y</text><path d="M704 640l-6-3" stroke="#b88"/>

<!-- MODEL -->
<g stroke="#94222f" stroke-width=".8" stroke-linejoin="round">
<polygon points="841,203 906,177 906,170 927,162 927,131 968,113 1016,143 1016,170 1044,188 1043,203 1080,227 1067,373 950,439 853,351" fill="#b98688"/>
<polygon points="853,351 950,439 1067,373 1025,348 950,300 873,342" fill="#d68c8c"/>
<polygon points="841,203 866,223 873,342 853,351" fill="#a87a7e"/>
<polygon points="866,223 904,217 905,257 868,263" fill="#b09698"/>
<polygon points="841,203 906,177 913,200 904,217 866,223" fill="#c87c7e"/>
<polygon points="866,223 868,263 875,370 873,342" fill="#a87478"/>
<polygon points="1043,203 1080,227 1040,248" fill="#cc7a7c"/>
<polygon points="1080,227 1067,373 1025,348 1040,248" fill="#a07478"/>
<polygon points="1015,170 1044,188 1043,203 1013,218 1012,207" fill="#c87c7e"/>
<polygon points="1015,205 1043,193 1043,203 1013,218" fill="#ac9a9c"/>
<polygon points="1013,218 1043,203 1040,248 1030,345 1005,360 1012,260" fill="#b07078"/>
<polygon points="906,172 927,162 957,180 993,178 1015,170 1012,220 1005,240 1012,270 1000,365 960,395 950,377 920,330 912,300 905,257 904,217 913,200" fill="#b8686e"/>
<polygon points="913,190 927,195 927,211 913,205" fill="#a89092"/>
<polygon points="927,162 957,180 956,225 927,200" fill="#a8606a"/>
<polygon points="993,178 1015,170 1012,220 993,235" fill="#a8606a"/>
<polygon points="957,180 993,178 993,205 957,207" fill="#c07076"/>
<polygon points="957,205 1012,204 1012,232 958,238" fill="#984650"/>
<polygon points="913,207 951,223 945,240 925,265 915,260" fill="#c8787c"/>
<polygon points="928,230 950,225 948,260 930,262" fill="#b23a44"/>
<polygon points="950,240 990,228 1012,240 1012,262 958,252" fill="#a8303c"/>
<polygon points="950,250 1012,260 1012,285 958,275" fill="#84323c"/>
<polygon points="868,263 903,258 943,272 912,300" fill="#c66a6e"/>
<polygon points="868,263 912,300 917,333 875,370" fill="#a8686e"/>
<polygon points="905,258 917,260 917,333 912,300" fill="#b07074"/>
<polygon points="912,300 943,272 945,295 920,318" fill="#a07a7e"/>
<polygon points="928,268 945,272 945,295 930,300" fill="#944a52"/>
<polygon points="958,278 1000,270 1030,290 995,312 958,300" fill="#ac2632"/>
<polygon points="945,295 955,290 990,315 995,333 965,338 930,312" fill="#bc3440"/>
<polygon points="995,312 1030,290 1035,345 1005,365 995,340" fill="#84323c"/>
<polygon points="1030,250 1041,248 1040,300 1035,345 1030,290" fill="#a8646a"/>
<polygon points="915,405 913,357 930,317 950,327 953,377" fill="#a8585f"/>
<polygon points="875,370 917,333 912,365 910,362" fill="#a4646a"/>
<polygon points="953,342 990,335 985,365 952,372" fill="#d89698"/>
<polygon points="952,377 985,357 1000,375 990,415" fill="#bc9294"/>
<polygon points="990,415 1000,375 1025,395" fill="#c88a8c"/>
<polygon points="1025,395 1025,348 1067,373" fill="#d28c8c"/>
<polygon points="950,439 950,377 990,415" fill="#d08c8e"/>
<polygon points="853,351 875,370 915,362 915,405 950,439" fill="#d08488"/>
<polygon points="915,405 950,377 950,439" fill="#d48a8c"/>
<polygon points="927,131 968,113 1016,143 993,152 956,152" fill="#ca7a7e"/>
<polygon points="927,131 956,152 956,180 927,162" fill="#a89294"/>
<polygon points="956,152 993,152 993,178 957,180" fill="#ba989a"/>
<polygon points="993,152 1016,143 1016,168 993,178" fill="#ac9698"/>
<path d="M968 113V152M956 152V370M967 152V375M993 152V376M998 180V365M955 180L993 178M912 190L906 172M913 200L922 232M913 212L960 205M1012 205V235M905 257L943 272M958 278L1030 290M950 377L853 351M915 405L1010 350" fill="none"/>
</g>
<g filter="url(#mot)" fill="#000" opacity=".85">
<polygon points="868,263 912,300 917,333 875,370"/>
<polygon points="915,405 913,357 930,317 950,327 953,377"/>
<polygon points="930,170 955,182 955,222 930,200"/>
<polygon points="994,180 1014,172 1011,220 994,232"/>
<polygon points="958,205 1010,205 1010,235 958,232"/>
<polygon points="1013,220 1041,205 1040,290 1030,285 1013,250"/>
<polygon points="905,215 914,218 916,262 906,258"/>
<polygon points="990,240 1010,240 1010,290 990,285"/>
</g>
<use href="#x" x="974" y="323"/><use href="#x" x="970" y="344"/><use href="#x" x="978" y="367"/><use href="#x" x="982" y="386"/><use href="#x" x="953" y="398"/><use href="#x" x="912" y="379"/><use href="#x" x="926" y="354"/><use href="#x" x="900" y="350"/><use href="#x" x="938" y="344"/><use href="#x" x="1030" y="367"/><use href="#x" x="1000" y="346"/>

<!-- left toolbars -->
<path d="M646 120H665M666 120H685" stroke="#999"/>
<g stroke="#444" fill="none" stroke-width=".9">
<path d="M651 123l1 10 2-2 2 4 2-1-2-4 3-.5z" fill="#fff"/><rect x="674" y="127" width="2" height="2"/>
<path d="M650 153l3-9 6 6"/><circle cx="653" cy="144" r="1.200"/><path d="M669 143q8-1 11 1M669 153q8 1 11-1M669 143v10"/>
<circle cx="655" cy="167" r="7"/><circle cx="655" cy="167" r="1.500"/><ellipse cx="675" cy="167" rx="7" ry="5"/><circle cx="675" cy="167" r="1.200"/>
<path d="M649 192v-12l11 8zM649 180q6 0 11 8"/><rect x="669" y="181" width="12" height="10"/>
<circle cx="655" cy="205" r="6"/><circle cx="655" cy="205" r="1.500"/><path d="M669 200h3q8 0 8 12" stroke-width="1.500"/>
</g>
<path d="M650 219l10-1-1 13-11 0z" fill="#4a78b4" stroke="#223"/><path d="M669 220q8-2 12 3l-3 9q-2-6-9-7z" fill="#a0b8d8" stroke="#456"/>
<path d="M650 241l5-3 6 3v7l-5 3-6-3z" fill="#3a6ab8"/><path d="M655 243l6-2v7l-5 3z" fill="#1c3c88"/>
<circle cx="672" cy="247" r="5" fill="#4a74b8"/><circle cx="678" cy="242" r="5" fill="#6a90c8"/>
<path d="M649 260a6 2.500 0 0 0 12 0M649 261v7q6 4 12 0v-7" fill="#a0c0e8" stroke="#334"/><ellipse cx="655" cy="258" rx="5" ry="2" fill="none" stroke="#333"/>
<path d="M670 268l5-9 7 1-4 9z" fill="#6c88b0" stroke="#223"/>
<path d="M649 281l5-3 2 2 4 2 2 3-1 3-4-1-2 3-3-3-3-1z" fill="#e8b030" stroke="#553"/><path d="M656 284l5 5" stroke="#eee" stroke-width="2"/>
<path d="M668 290l2-8 3 3 3-6 1 5 4-3-3 9z" fill="#f0a820"/>
<path d="M649 300h7v-6h3v8h-10zM656 302l4 4" stroke="#335" fill="#b4c8e0"/><path d="M669 302h7v-6h4v8h-11z" fill="#2a4a90"/>
<path d="M652 324a4 4 0 1 1 6 0l1 3h-9z" fill="#223"/><circle cx="655" cy="323" r="1.500" fill="#fff"/>
<circle cx="674" cy="317" r="2.500" fill="#eee" stroke="#555"/><circle cx="671" cy="324" r="2.800" fill="#6c80c0"/><circle cx="678" cy="324" r="2.800" fill="#334"/>
<path d="M649 340q7-3 10 6" fill="none" stroke="#222" stroke-width="1.500"/><path d="M669 338q9 0 11 9" fill="none" stroke="#222" stroke-width="1.500"/><path d="M672 336q6 0 8 6" fill="none" stroke="#888"/>
<text x="655" y="366" text-anchor="middle" style="font-size:15px;font-weight:bold;fill:#4a78b4;font-family:'Liberation Serif',serif">T</text>
<path d="M670 366l10-10" stroke="#666" stroke-dasharray="2 1"/><rect x="669" y="362" width="4" height="4" fill="#fff" stroke="#444"/><rect x="678" y="354" width="4" height="4" fill="#fff" stroke="#444"/>
<g fill="#d8e0f0" stroke="#334"><rect x="649" y="373" width="5" height="5"/><rect x="656" y="378" width="5" height="5"/><rect x="649" y="382" width="5" height="5"/></g>
<rect x="669" y="373" width="5" height="10" fill="#fff" stroke="#555"/><path d="M676 384l6-6" stroke="#5a80c0" stroke-width="3"/>
<path d="M649 395l5-3h7v10l-3 3h-9z" fill="#3a78c4" stroke="#223"/><rect x="654" y="400" width="4" height="4" fill="#fff"/>
<path d="M669 403h12M672 392v9M675 392v9M678 392v9" stroke="#668"/>

<!-- snap row -->
<rect x="645" y="652" width="492" height="15" fill="#d6d6d4"/>
<rect x="1137" y="652" width="78" height="15" fill="#d0d0ce"/>
<path d="M645 651.500H1137" stroke="#999"/>
<use href="#ck0" x="654" y="658"/><use href="#ck0" x="692" y="658"/><use href="#ck0" x="729" y="658"/><use href="#ck0" x="766" y="658"/><use href="#ck0" x="803" y="658"/><use href="#ck0" x="840" y="658"/><use href="#ck0" x="877" y="658"/>
<rect x="911" y="654" width="8" height="8" fill="#fff" stroke="#555"/><rect x="946" y="654" width="8" height="8" fill="#fff" stroke="#555"/><rect x="985" y="654" width="8" height="8" fill="#fff" stroke="#555"/>
<rect x="1022" y="654" width="8" height="8" fill="#666" stroke="#777"/><rect x="1059" y="654" width="8" height="8" fill="#666" stroke="#777"/><rect x="1096" y="654" width="8" height="8" fill="#e8e8e8" stroke="#555"/>
<g style="font-size:7.900px">
<text x="662" y="662">End</text><text x="699" y="662">Near</text><text x="737" y="662">Point</text><text x="774" y="662">Mid</text><text x="811" y="662">Cen</text><text x="848" y="662">Int</text><text x="885" y="662">Perp</text><text x="922" y="662">Tan</text><text x="960" y="662">Quad</text><text x="996" y="662">Knot</text><text x="1033" y="662">Project</text><text x="1070" y="662">STrack</text><text x="1108" y="662">Disable</text>
</g>
<path d="M1137 652V667" stroke="#999"/>
<!-- bottom toolbar -->
<rect x="645" y="667" width="570" height="20" fill="#d2d2d0"/>
<path d="M649 669V686" stroke="#999"/>
<path d="M654 669h7l3 3v11h-10z" fill="#fff" stroke="#444"/><rect x="656" y="672" width="2" height="2" fill="#c22"/>
<path d="M671 678h17M679 678v6h5v-6M680 677l7-5" stroke="#2c5aa0" fill="none" stroke-width="1.300"/><path d="M671 678h8" stroke="#c22"/>
<path d="M694 669h9l-3 7h-3z" fill="#2c4a90"/><circle cx="695" cy="681" r="2.500" fill="#ccc" stroke="#555"/><circle cx="702" cy="681" r="2.500" fill="#ccc" stroke="#555"/>
<circle cx="717" cy="677" r="4" fill="none" stroke="#444"/><path d="M709 669l6 6M715 669l-6 6" stroke="#c22"/><path d="M711 680q8 4 12-1" fill="none" stroke="#444"/>
<path d="M733 670h10l-2 7h-6zM730 682h14M737 677v8" stroke="#333" fill="none"/>
<path d="M748 674l12-3 3 7-12 4z" fill="#b83050" stroke="#444"/>
<g fill="#8aa0c0" stroke="#445" stroke-width=".7"><path d="M771 675l6 2-6 4zM777 673l6 4-6 4z"/><path d="M792 675l6 2-6 4zM798 673l6 4-6 4z"/><path d="M812 672l6 2-2 5 5 2-6 3-5-6z"/></g>
<g fill="none" stroke="#555" stroke-dasharray="1 1"><path d="M768 671h6M782 671h4M768 684h6M782 684h4M789 671h6M803 671h4M789 684h6M803 684h4M812 669h8"/></g>
<circle cx="832" cy="675" r="5" fill="#ddd" stroke="#444"/><path d="M828 679l-4 5" stroke="#444" stroke-width="1.300"/>
<path d="M847 672l10-2v10l-6 3-5-2z" fill="#c81820"/><path d="M850 669l5-3" stroke="#333"/>
<text x="871" y="681" text-anchor="middle" style="fill:#c02020;font-size:9px;font-weight:bold" textLength="16" lengthAdjust="spacingAndGlyphs">NAME</text>
<circle cx="890" cy="675" r="7" fill="#aaa" stroke="#222"/><rect x="887" y="680" width="6" height="4" fill="#eee"/>
<text x="909" y="682" text-anchor="middle" style="fill:#555;font-size:15px;font-family:'Liberation Serif',serif" textLength="18" lengthAdjust="spacingAndGlyphs">BIM</text>
<rect x="921" y="668" width="16" height="17" fill="#7a54b0"/><path d="M921 672l16 5M921 677l16 5M921 682l10 3M925 668l12 4" stroke="#b090d8"/>
<path d="M941 674l8-4 7 3v8l-7 4-8-3z" fill="#2a70c8"/><path d="M941 669l5 5" stroke="#e09030" stroke-width="2.500"/>
<path d="M960 671h11v13h-11z" fill="#999" stroke="#333"/><rect x="963" y="673" width="6" height="4" fill="#ddd"/>
<rect x="979" y="670" width="6" height="4" fill="#f0e8a0" stroke="#887"/><rect x="985" y="677" width="6" height="4" fill="#f0e8a0" stroke="#887"/><rect x="979" y="681" width="6" height="3" fill="#f0e8a0" stroke="#887"/>
<path d="M1002 670v14M1008 670v14M999 674h12M999 681h12" stroke="#3a3ac8" stroke-width="1.400"/>
<circle cx="1025" cy="677" r="7.500" fill="#a0c8e8" stroke="#556"/><path d="M1025 677l3-5" stroke="#222" stroke-width="1.400"/>
<path d="M1036 684l3-8h11l-3 8zM1040 676l4-7q5 0 6 4" fill="#e8c060" stroke="#664"/>
<circle cx="1063" cy="676" r="7" fill="#3a60c8"/><text x="1063" y="680" text-anchor="middle" style="fill:#fff;font-size:10px;font-weight:bold">?</text>
<!-- status -->
<rect x="645" y="687" width="570" height="14" fill="#d8d8d6"/>
<path d="M645 687H1213M645 700H1213" stroke="#aaa"/>
<rect x="646" y="688" width="37" height="12" fill="#cfcfcd" stroke="#bbb"/>
<g style="font-size:7.900px">
<text x="663" y="697" text-anchor="middle">CPlane</text><text x="686" y="697">x 396.03</text><text x="746" y="697">y 228.67</text><text x="807" y="697">z 0.00</text><text x="937" y="697">Default</text>
<text x="1023" y="697" text-anchor="middle">Snap</text><text x="1055" y="697" text-anchor="middle" class="b">Ortho</text><text x="1088" y="697" text-anchor="middle" class="b">Planar</text><text x="1121" y="697" text-anchor="middle" class="b">Osnap</text><text x="1175" y="697" text-anchor="middle">Record History</text>
</g>
<rect x="929" y="690" width="8" height="8" fill="#000"/>
<g fill="none" stroke="#fff"><rect x="1039" y="688.500" width="32" height="11"/><rect x="1073" y="688.500" width="32" height="11"/><rect x="1107" y="688.500" width="33" height="11"/></g>
<path d="M1006 688V700M1140 688V700M1210 690l-8 9M1212 694l-5 5" stroke="#999"/>

<!-- TASKBAR -->
<rect x="64" y="700" width="1151" height="20" fill="#d4d4d2"/>
<path d="M64 701H1215" stroke="#eee"/>
<rect x="66" y="703" width="34" height="15" rx="1" fill="#dadad8" stroke="#888"/>
<rect x="69" y="706" width="4" height="4" fill="#e04020"/><rect x="74" y="705" width="4" height="4" fill="#50a030"/><rect x="68" y="711" width="4" height="4" fill="#3a70c8"/><rect x="73" y="710" width="4" height="4" fill="#e8b020"/>
<text x="79" y="714" style="font-size:9.500px;font-weight:bold;fill:#333">Start</text>
<rect x="108" y="704" width="16" height="14" fill="#cbe0d0" stroke="#999"/><rect x="112" y="707" width="10" height="9" fill="#e8e8b0"/><path d="M126 703V718M129 703V718" stroke="#777"/>
<rect x="131" y="703" width="19" height="15" fill="#fff" stroke="#888"/><rect x="134" y="705" width="13" height="11" fill="#111"/><path d="M136 707l8 3-3 2 2 3-4-3-3 1z" fill="#ccc"/>
<circle cx="164" cy="711" r="6" fill="#d8782c"/><circle cx="165" cy="711" r="3" fill="#8a8aa8"/><path d="M158 711q2-6 8-6" stroke="#e8a040" fill="none" stroke-width="1.500"/>
<rect x="182" y="704" width="12" height="13" fill="#1c5aa8"/><text x="188" y="714" text-anchor="middle" style="font-size:7px;font-weight:bold;fill:#cfe0ff">Ps</text>
<rect x="200" y="703" width="22" height="15" fill="#dcdcda" stroke="#999"/><circle cx="211" cy="711" r="6" fill="#d8782c"/><circle cx="212" cy="711" r="3" fill="#8a8aa8"/><path d="M205 711q2-6 8-6" stroke="#e8a040" fill="none" stroke-width="1.500"/>
<!-- tray -->
<text x="1018" y="715" text-anchor="middle" style="font-size:10px;fill:#444;font-family:'Liberation Serif',serif">A</text>
<path d="M1031 706l7 8 2 3M1030 709l3-3" stroke="#8098b0" stroke-width="2.500" fill="none"/>
<circle cx="1052" cy="711" r="5" fill="#2a60b0"/><circle cx="1056" cy="711" r="3" fill="#e09030"/>
<path d="M1065 704V718M1080 704V718" stroke="#999"/>
<circle cx="1070" cy="711" r="5.500" fill="#3050b0"/><text x="1070" y="714" text-anchor="middle" style="font-size:8px;font-weight:bold;fill:#fff">?</text>
<rect x="1082" y="704" width="14" height="6" fill="#eee" stroke="#888" stroke-width=".6"/><rect x="1082" y="711" width="14" height="6" fill="#eee" stroke="#888" stroke-width=".6"/>
<text x="1089" y="709" text-anchor="middle" style="font-size:4.500px;fill:#444">CAPS</text><text x="1089" y="716" text-anchor="middle" style="font-size:4.500px;fill:#444">KANA</text>
<path d="M1102 706h4M1102 708h4M1102 715h4l-2 2z" stroke="#555" fill="#555"/>
<path d="M1111 703V718" stroke="#888"/>
<path d="M1113 712l3-3 3 3M1113 709l3-3 3 3" fill="none" stroke="#444"/>
<path d="M1127 705V717M1127 705h8l-2 3 2 3h-8" fill="none" stroke="#888"/>
<rect x="1144" y="705" width="10" height="11" fill="#ccc" stroke="#888"/><path d="M1146 708h6M1146 711h6" stroke="#777"/>
<path d="M1160 708h3l4-3v12l-4-3h-3z" fill="#c4a890" stroke="#888" stroke-width=".6"/><circle cx="1167" cy="715" r="3.500" fill="#d03030"/>
<text x="1192" y="714" text-anchor="middle" style="font-size:9.500px;fill:#444">16:37</text>
<rect x="1204" y="705" width="10" height="10" fill="#3070b0"/>
</svg>
</body></html>
